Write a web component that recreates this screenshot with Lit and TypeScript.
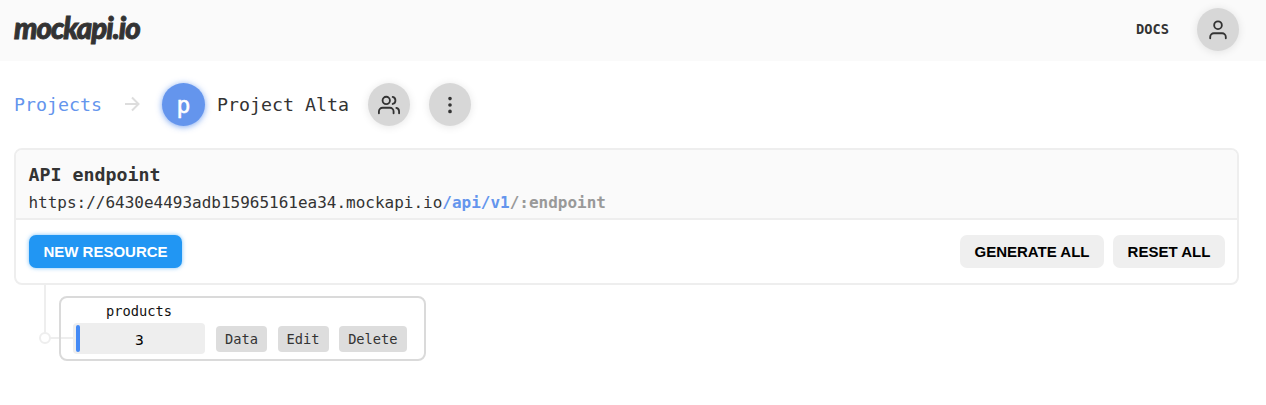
import { LitElement, html, css, svg } from "lit";
import { customElement, property } from "lit/decorators.js";

const icons: Record<string, unknown> = {
  user: svg`<circle cx="12" cy="6.8" r="4.2"/><path d="M20.5 21v-1.5a4 4 0 0 0-4-4H7.5a4 4 0 0 0-4 4V21"/>`,
  users: svg`<circle cx="9" cy="7" r="4"/><path d="M17 21v-2a4 4 0 0 0-4-4H5a4 4 0 0 0-4 4v2M23 21v-2a4 4 0 0 0-3-3.87M16 3.13a4 4 0 0 1 0 7.75"/>`,
  more: svg`<circle cx="12" cy="5" r="1"/><circle cx="12" cy="12" r="1"/><circle cx="12" cy="19" r="1"/>`,
};

@customElement("round-button")
export class RoundButton extends LitElement {
  @property() icon = "user";
  static styles = css`
    :host { display: block; flex: none; }
    button {
      display: flex; align-items: center; justify-content: center;
      width: 42px; height: 43px; padding: 0; border: 0; border-radius: 50%;
      background: #d7d7d7; color: #333; box-shadow: 0 1px 8px rgba(0, 0, 0, 0.1);
    }
    svg { width: 22px; height: 22px; fill: none; stroke: currentColor; stroke-width: 2; stroke-linecap: round; stroke-linejoin: round; }
  `;
  render() {
    return html`<button aria-label=${this.icon}><svg viewBox="0 0 24 24">${icons[this.icon]}</svg></button>`;
  }
}

@customElement("resource-card")
export class ResourceCard extends LitElement {
  @property() name = "";
  @property({ type: Number }) count = 0;
  static styles = css`
    :host { display: flex; font-family: "DejaVu Sans Mono", monospace; font-size: 13.7px; }
    .branch { width: 35px; height: 77px; margin: 0 -14px 0 38px; flex: none; overflow: visible; fill: none; stroke: #eee; stroke-width: 2; }
    .card {
      box-sizing: border-box; width: 367px; height: 65px; margin-top: 11px; padding: 3px 0 0 12px;
      border: 2px solid #dadada; border-radius: 8px;
    }
    .name { width: 132px; height: 22px; line-height: 20px; text-align: center; color: #111; }
    .row { display: flex; align-items: center; }
    .meter {
      box-sizing: border-box; width: 132px; height: 31px; padding: 2px 3px; margin-right: 11px;
      display: flex; background: #eee; border-radius: 4px;
    }
    .bar { width: 4px; height: 27px; border-radius: 2px; background: #448af5; }
    .count { flex: 1; padding-right: 3px; text-align: center; line-height: 30px; font-size: 14.6px; color: #000; }
    .action {
      height: 26px; padding: 0 9px; margin: 1px 10.6px 0 0; border: 0; border-radius: 4px;
      background: #ddd; color: #333; font: inherit; line-height: 26px;
    }
  `;
  render() {
    return html`
      <svg class="branch" viewBox="0 0 35 77">
        <path d="M7 0V48M12 53H35" /><circle cx="7" cy="53" r="5" />
      </svg>
      <div class="card">
        <div class="name">${this.name}</div>
        <div class="row">
          <div class="meter"><div class="bar"></div><div class="count">${this.count}</div></div>
          ${["Data", "Edit", "Delete"].map((a) => html`<button class="action">${a}</button>`)}
        </div>
      </div>
    `;
  }
}

@customElement("app-root")
export class AppRoot extends LitElement {
  static styles = css`
    :host { display: block; height: 405px; overflow: hidden; background: #fff; color: #333; font-family: "DejaVu Sans Mono", monospace; }
    header { display: flex; align-items: center; box-sizing: border-box; height: 61px; padding: 0 27px 2px 14px; background: #fafafa; }
    .logo {
      margin-right: auto; padding-bottom: 4px; font: italic 900 29.5px/40px Lato, sans-serif;
      letter-spacing: -1px; -webkit-text-stroke: 0.9px #333; white-space: nowrap;
    }
    .docs { margin-right: 28px; padding-bottom: 2px; font-size: 13.7px; font-weight: 700; }
    nav { display: flex; align-items: center; height: 43px; padding: 22px 14px 0; font-size: 18.27px; white-space: nowrap; }
    .projects { color: #6495ed; }
    .arrow { width: 16px; height: 16px; margin: 0 22px 2px 22px; fill: none; stroke: #ddd; stroke-width: 2; }
    .avatar {
      width: 43px; height: 43px; margin-right: 12px; border-radius: 50%; background: #6495ed; color: #fff;
      font-size: 23px; line-height: 44px; text-align: center; -webkit-text-stroke: 0.5px #fff;
      box-shadow: 0 1px 6px rgba(100, 149, 237, 0.85);
    }
    .title { margin-right: 19px; }
    .people { margin-right: 19px; }
    .panel { box-sizing: border-box; height: 137px; margin: 22px 27px 0 14px; border: 2px solid #eee; border-radius: 8px; overflow: hidden; }
    .endpoint { box-sizing: border-box; height: 70px; padding: 12px 12.5px 0; border-bottom: 2px solid #eee; background: #fafafa; }
    .heading { font-size: 18.27px; line-height: 26px; font-weight: 700; }
    .url { font-size: 15.99px; line-height: 29px; white-space: nowrap; }
    .path { color: #6495ed; font-weight: 700; }
    .param { color: #999; font-weight: 700; }
    .toolbar { display: flex; gap: 9px; padding: 15px 12px 0 13px; }
    .btn {
      height: 33px; padding: 0; border: 0; border-radius: 7px; background: #efefef; color: #000;
      font: 700 15px "Liberation Sans", sans-serif; white-space: nowrap;
    }
    .new { width: 153px; margin-right: auto; background: #2196f3; color: #fff; box-shadow: 0 0 4px rgba(33, 150, 243, 0.6); }
    .generate { width: 144px; }
    .reset { width: 112px; }
  `;
  render() {
    return html`
      <header>
        <div class="logo">mockapi.io</div>
        <div class="docs">DOCS</div>
        <round-button icon="user"></round-button>
      </header>
      <nav>
        <span class="projects">Projects</span>
        <svg class="arrow" viewBox="0 0 16 16"><path d="M1 8H14.5M8 1.5L14.5 8L8 14.5" /></svg>
        <div class="avatar">p</div>
        <span class="title">Project Alta</span>
        <round-button class="people" icon="users"></round-button>
        <round-button icon="more"></round-button>
      </nav>
      <section class="panel">
        <div class="endpoint">
          <div class="heading">API endpoint</div>
          <div class="url">https://6430e4493adb15965161ea34.mockapi.io<span class="path">/api/v1</span><span class="param">/:endpoint</span></div>
        </div>
        <div class="toolbar">
          <button class="btn new">NEW RESOURCE</button>
          <button class="btn generate">GENERATE ALL</button>
          <button class="btn reset">RESET ALL</button>
        </div>
      </section>
      <resource-card name="products" count="3"></resource-card>
    `;
  }
}
